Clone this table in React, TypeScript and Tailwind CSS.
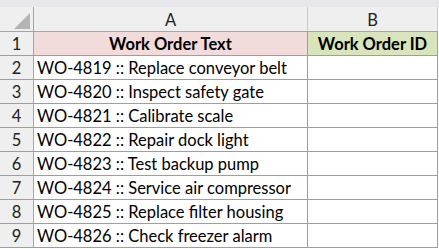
import React from "react";

const rows = [
  "WO-4819 :: Replace conveyor belt",
  "WO-4820 :: Inspect safety gate",
  "WO-4821 :: Calibrate scale",
  "WO-4822 :: Repair dock light",
  "WO-4823 :: Test backup pump",
  "WO-4824 :: Service air compressor",
  "WO-4825 :: Replace filter housing",
  "WO-4826 :: Check freezer alarm",
];

const App = () => {
  return (
    <div className="w-[439px] h-[249px] bg-white overflow-hidden text-black" style={{ fontFamily: "Lato, 'Open Sans', sans-serif" }}>
      <div className="h-[7px] bg-[#e6e6eb]" />
      {/* column headers */}
      <div className="flex h-[25px] bg-[#efefef] border-b border-[#a6a6a6] w-[438px]">
        <div className="relative w-[34px] border-r border-[#a6a6a6]">
          <svg className="absolute left-[14px] top-[6px]" width="16" height="16" viewBox="0 0 16 16">
            <polygon points="16,0 16,16 0,16" fill="#b4b4b4" />
          </svg>
        </div>
        <div className="w-[274px] border-r border-[#c8c8c8] flex items-center justify-center pt-[2px] text-[16.5px] text-[#222]">A</div>
        <div className="w-[130px] border-r border-[#c8c8c8] flex items-center justify-center pt-[2px] text-[16.5px] text-[#222]">B</div>
      </div>
      {/* header row 1 */}
      <div className="flex h-[24px] w-[438px] border-b border-[#9e9e9e]">
        <div className="w-[34px] bg-[#efefef] border-r border-[#a6a6a6] flex items-center justify-center pt-[2px] text-[16.5px] text-[#222]">1</div>
        <div className="w-[274px] bg-[#f2dcdb] border-r border-[#9e9e9e] flex items-center justify-center pt-[2px] text-[16.5px] font-bold">Work Order Text</div>
        <div className="w-[130px] bg-[#d8e4bc] border-r border-[#9e9e9e] flex items-center justify-center pt-[2px] text-[16.5px] font-bold">Work Order ID</div>
      </div>
      {rows.map((text, i) => (
        <div key={i} className="flex h-[24px] w-[438px] border-b border-[#9e9e9e]">
          <div className="w-[34px] bg-[#efefef] border-r border-[#a6a6a6] flex items-center justify-center pt-[2px] text-[16.5px] text-[#222]">{i + 2}</div>
          <div className="w-[274px] border-r border-[#9e9e9e] flex items-center pl-[3px] pt-[2px] text-[16.5px] whitespace-nowrap">{text}</div>
          <div className="w-[130px] border-r border-[#9e9e9e]" />
        </div>
      ))}
    </div>
  );
};

export default App;
